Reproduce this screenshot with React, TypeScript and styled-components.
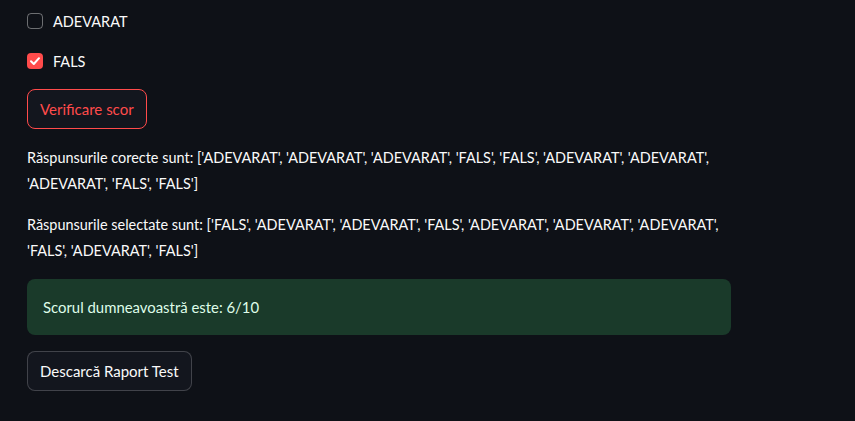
import React from "react";
import styled, { createGlobalStyle } from "styled-components";

const Global = createGlobalStyle`
  html, body { margin: 0; padding: 0; background: #0e1117; }
  body { font-family: "Lato", "Noto Sans", sans-serif; color: #fafafa; }
`;

const Page = styled.div`
  display: flex;
  flex-direction: column;
  align-items: flex-start;
  gap: 16px;
  width: 704px;
  padding: 9px 0 0 27px;
`;

const CheckRow = styled.label`
  display: flex;
  align-items: center;
  gap: 10px;
  height: 24px;
  font-size: 14.5px;
  color: #fafafa;
`;

const Box = styled.span<{ $checked?: boolean }>`
  width: 16px;
  height: 16px;
  box-sizing: border-box;
  border-radius: 4px;
  display: flex;
  align-items: center;
  justify-content: center;
  background: ${(p) => (p.$checked ? "#ff4b4b" : "transparent")};
  border: ${(p) => (p.$checked ? "none" : "1px solid rgba(250,250,250,0.4)")};
`;

const Button = styled.button<{ $primary?: boolean }>`
  height: 40px;
  box-sizing: border-box;
  padding: 0 12px;
  border-radius: 8px;
  background: #13161e;
  font-family: inherit;
  font-size: 15px;
  color: ${(p) => (p.$primary ? "#ff4b4b" : "#fafafa")};
  border: 1px solid ${(p) => (p.$primary ? "#ff4b4b" : "rgba(250,250,250,0.2)")};
`;

const Para = styled.p`
  margin: 0;
  font-size: 14.45px;
  line-height: 25.6px;
  width: 100%;
`;

const Success = styled.div`
  width: 100%;
  box-sizing: border-box;
  padding: 16px;
  border-radius: 8px;
  background: #1a3a2a;
  color: #dffde9;
  font-size: 14.9px;
  line-height: 24px;
`;

const Check = () => (
  <svg width="12" height="12" viewBox="0 0 12 12" fill="none">
    <path d="M2 6.2 L4.8 9 L10 3.2" stroke="#fff" strokeWidth="2" strokeLinecap="round" strokeLinejoin="round" />
  </svg>
);

export default function App() {
  return (
    <>
      <Global />
      <Page>
        <CheckRow>
          <Box />
          ADEVARAT
        </CheckRow>
        <CheckRow>
          <Box $checked>
            <Check />
          </Box>
          FALS
        </CheckRow>
        <Button $primary>Verificare scor</Button>
        <Para>
          Răspunsurile corecte sunt: ['ADEVARAT', 'ADEVARAT', 'ADEVARAT', 'FALS', 'FALS', 'ADEVARAT', 'ADEVARAT',
          'ADEVARAT', 'FALS', 'FALS']
        </Para>
        <Para>
          Răspunsurile selectate sunt: ['FALS', 'ADEVARAT', 'ADEVARAT', 'FALS', 'ADEVARAT', 'ADEVARAT', 'ADEVARAT',
          'FALS', 'ADEVARAT', 'FALS']
        </Para>
        <Success>Scorul dumneavoastră este: 6/10</Success>
        <Button>Descarcă Raport Test</Button>
      </Page>
    </>
  );
}
